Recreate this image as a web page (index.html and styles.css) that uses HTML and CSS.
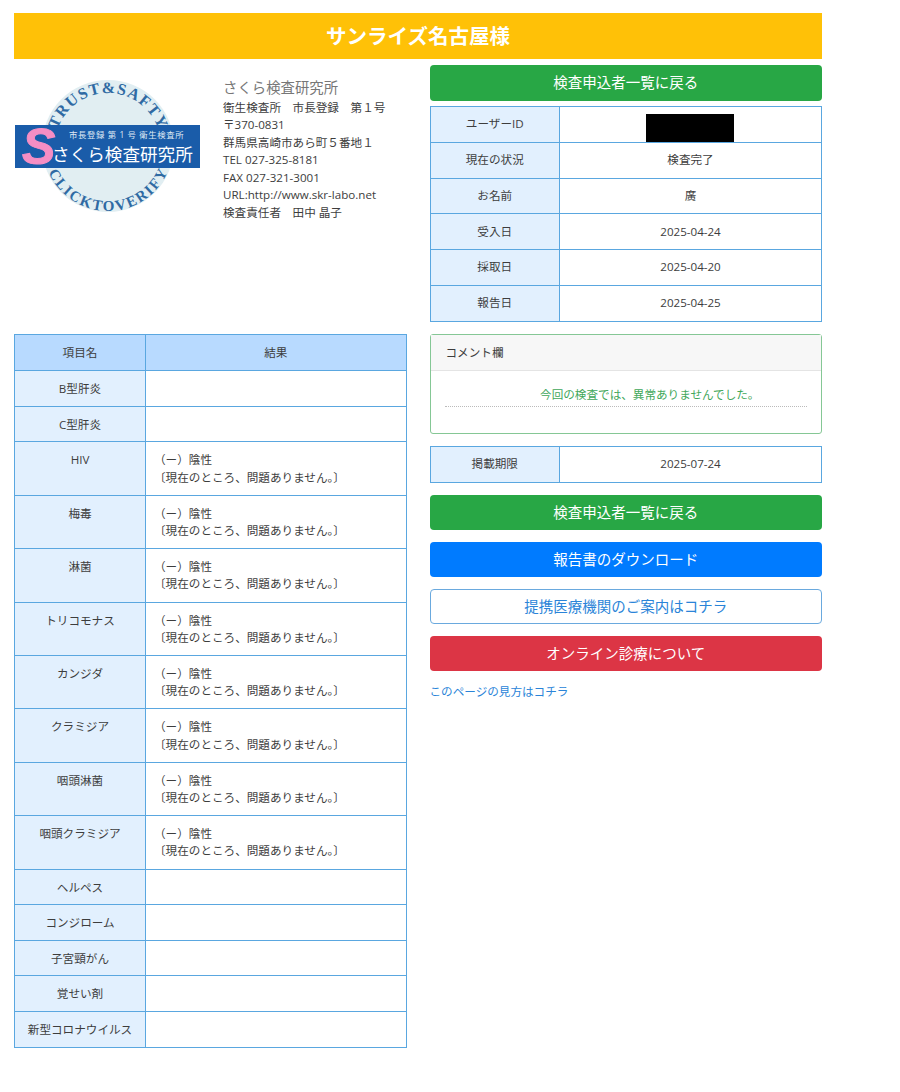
FILE: index.html
```html
<!DOCTYPE html>
<html lang="ja">
<head>
    <meta charset="UTF-8">
    <meta name="viewport" content="width=device-width, initial-scale=1.0">
    <title>検査結果</title>
    <link rel="stylesheet" href="styles.css">
</head>
<body>
    <div class="page">
        <h1 class="page-title">サンライズ名古屋様</h1>
        <div class="columns">
            <!-- Left column -->
            <div class="col">
                <div class="lab-info">
                    <svg class="seal" viewBox="0 0 186 135" width="186" height="135">
                        <defs>
                            <path id="arcTop" d="M 41 68 A 53 53 0 0 1 147 68"></path>
                            <path id="arcBottom" d="M 29 68 A 65 65 0 0 0 159 68"></path>
                        </defs>
                        <circle cx="94" cy="68" r="66" fill="#e1eef2"></circle>
                        <text class="seal-arc seal-arc-top"><textPath href="#arcTop" startOffset="50%" text-anchor="middle" textLength="132">TRUST&amp;SAFTY</textPath></text>
                        <text class="seal-arc"><textPath href="#arcBottom" startOffset="50%" text-anchor="middle" textLength="150">CLICKTOVERIFY</textPath></text>
                        <rect x="1" y="47" width="185" height="43" fill="#1a5ca9"></rect>
                        <text class="seal-mark" x="8" y="86">S</text>
                        <text class="seal-small" x="55" y="60">市長登録 第 1 号 衛生検査所</text>
                        <text class="seal-name" x="38" y="83">さくら検査研究所</text>
                    </svg>
                    <div class="lab-text">
                        <div class="lab-name">さくら検査研究所</div>
                        <div>衛生検査所　市長登録　第１号</div>
                        <div>〒370-0831</div>
                        <div>群馬県高崎市あら町５番地１</div>
                        <div>TEL 027-325-8181</div>
                        <div>FAX 027-321-3001</div>
                        <div>URL:http://www.skr-labo.net</div>
                        <div>検査責任者　田中 晶子</div>
                    </div>
                </div>
                <table class="result-table">
                    <tr>
                        <th>項目名</th>
                        <th class="center">結果</th>
                    </tr>
                    <tr><th class="item">B型肝炎</th><td></td></tr>
                    <tr><th class="item">C型肝炎</th><td></td></tr>
                    <tr><th class="item">HIV</th><td>（ー）陰性<br>〔現在のところ、問題ありません。〕</td></tr>
                    <tr><th class="item">梅毒</th><td>（ー）陰性<br>〔現在のところ、問題ありません。〕</td></tr>
                    <tr><th class="item">淋菌</th><td>（ー）陰性<br>〔現在のところ、問題ありません。〕</td></tr>
                    <tr><th class="item">トリコモナス</th><td>（ー）陰性<br>〔現在のところ、問題ありません。〕</td></tr>
                    <tr><th class="item">カンジダ</th><td>（ー）陰性<br>〔現在のところ、問題ありません。〕</td></tr>
                    <tr><th class="item">クラミジア</th><td>（ー）陰性<br>〔現在のところ、問題ありません。〕</td></tr>
                    <tr><th class="item">咽頭淋菌</th><td>（ー）陰性<br>〔現在のところ、問題ありません。〕</td></tr>
                    <tr><th class="item">咽頭クラミジア</th><td>（ー）陰性<br>〔現在のところ、問題ありません。〕</td></tr>
                    <tr><th class="item">ヘルペス</th><td></td></tr>
                    <tr><th class="item">コンジローム</th><td></td></tr>
                    <tr><th class="item">子宮頸がん</th><td></td></tr>
                    <tr><th class="item">覚せい剤</th><td></td></tr>
                    <tr><th class="item">新型コロナウイルス</th><td></td></tr>
                </table>
            </div>
            <!-- Right column -->
            <div class="col">
                <a class="btn btn-green btn-top">検査申込者一覧に戻る</a>
                <table class="info-table">
                    <tr><th>ユーザーID</th><td class="masked-cell"><span class="masked"></span></td></tr>
                    <tr><th>現在の状況</th><td>検査完了</td></tr>
                    <tr><th>お名前</th><td>廣</td></tr>
                    <tr><th>受入日</th><td>2025-04-24</td></tr>
                    <tr><th>採取日</th><td>2025-04-20</td></tr>
                    <tr><th>報告日</th><td>2025-04-25</td></tr>
                </table>
                <div class="comment-card">
                    <div class="comment-head">コメント欄</div>
                    <div class="comment-body">
                        <div class="comment-line">今回の検査では、異常ありませんでした。</div>
                    </div>
                </div>
                <table class="info-table limit-table">
                    <tr><th>掲載期限</th><td>2025-07-24</td></tr>
                </table>
                <div class="btn-list">
                    <a class="btn btn-green">検査申込者一覧に戻る</a>
                    <a class="btn btn-blue">報告書のダウンロード</a>
                    <a class="btn btn-outline">提携医療機関のご案内はコチラ</a>
                    <a class="btn btn-red">オンライン診療について</a>
                </div>
                <a class="help-link">このページの見方はコチラ</a>
            </div>
        </div>
    </div>
</body>
</html>
```

FILE: styles.css
```css
body {
    font-family: "Open Sans", "Noto Sans CJK JP", sans-serif;
    font-size: 11.6px;
    line-height: 1.4;
    margin: 0;
    padding: 0;
    background: #fff;
    color: #3d3d3d;
}

.page {
    width: 808px;
    padding: 13px 0 0 14px;
}

.page-title {
    margin: 0;
    height: 46px;
    line-height: 46px;
    font-size: 20.5px;
    font-weight: bold;
    text-align: center;
    color: #fff;
    background-color: #ffc107;
}

.columns {
    display: flex;
    gap: 23px;
}

.col {
    width: 392.5px;
}

/* Lab details */
.lab-info {
    display: flex;
    height: 275px;
    padding-top: 19px;
    box-sizing: border-box;
}

.seal {
    flex: none;
    width: 186px;
    height: 135px;
}

.seal-arc {
    font-family: "Liberation Serif", serif;
    font-size: 15px;
    font-weight: bold;
    fill: #2f6aa3;
}

.seal-arc-top {
    font-size: 16px;
}

.seal-mark {
    font-family: "Liberation Sans", sans-serif;
    font-size: 50px;
    font-weight: bold;
    font-style: italic;
    fill: #f58ec4;
    stroke: #f58ec4;
}

.seal-small {
    font-size: 8.4px;
    letter-spacing: 0.6px;
    fill: #dfe9f4;
}

.seal-name {
    font-size: 17.6px;
    fill: #fff;
}

.lab-text {
    margin-left: 23px;
    line-height: 17.6px;
}

.lab-name {
    font-size: 14.4px;
    line-height: 20.5px;
    color: #777;
}

/* Tables */
table {
    width: 100%;
    border-collapse: collapse;
    table-layout: fixed;
}

th,
td {
    box-sizing: border-box;
    border: 1px solid #5aa7e0;
    font-weight: normal;
}

.result-table th:first-child {
    width: 131px;
}

.result-table th,
.result-table td {
    padding: 9px 15px;
    vertical-align: top;
    line-height: 17.2px;
}

.result-table tr:first-child th {
    background-color: #b8daff;
    text-align: center;
}

.result-table th.item {
    padding: 10px 2px 7.8px;
    background-color: #e2f0fe;
    line-height: 16.8px;
}

.result-table td {
    padding-left: 8px;
}

.info-table {
    margin-top: 5.5px;
}

.info-table th {
    width: 129.5px;
    background-color: #e2f0fe;
}

.info-table th,
.info-table td {
    height: 35.8px;
    padding: 0;
    text-align: center;
}

.info-table .masked-cell {
    vertical-align: bottom;
}

.masked {
    display: block;
    width: 88px;
    height: 28px;
    margin-left: 86px;
    background-color: #000;
}

.limit-table {
    margin-top: 12px;
}

/* Comment */
.comment-card {
    margin-top: 12px;
    height: 100px;
    box-sizing: border-box;
    border: 1px solid #85c795;
    border-radius: 3px;
}

.comment-head {
    height: 35px;
    line-height: 35px;
    padding-left: 15px;
    background-color: #f7f7f7;
    border-bottom: 1px solid #e4e4e4;
}

.comment-body {
    padding: 13px 14px 0;
}

.comment-line {
    padding-left: 48px;
    line-height: 22px;
    text-align: center;
    color: #3fa75a;
    border-bottom: 1px dotted #bbb;
}

/* Buttons */
.btn {
    display: block;
    height: 35.5px;
    line-height: 35px;
    box-sizing: border-box;
    font-size: 14.5px;
    text-align: center;
    color: #fff;
    border-radius: 4px;
}

.btn-top {
    margin-top: 6px;
}

.btn-list {
    display: flex;
    flex-direction: column;
    gap: 11.5px;
    margin-top: 12px;
}

.btn-green {
    background-color: #28a745;
}

.btn-blue {
    background-color: #007bff;
}

.btn-red {
    background-color: #dc3545;
}

.btn-outline {
    line-height: 33px;
    color: #2a84d8;
    background-color: #fff;
    border: 1px solid #6aa9de;
}

.help-link {
    display: block;
    margin-top: 13px;
    color: #2a84d8;
}
```
